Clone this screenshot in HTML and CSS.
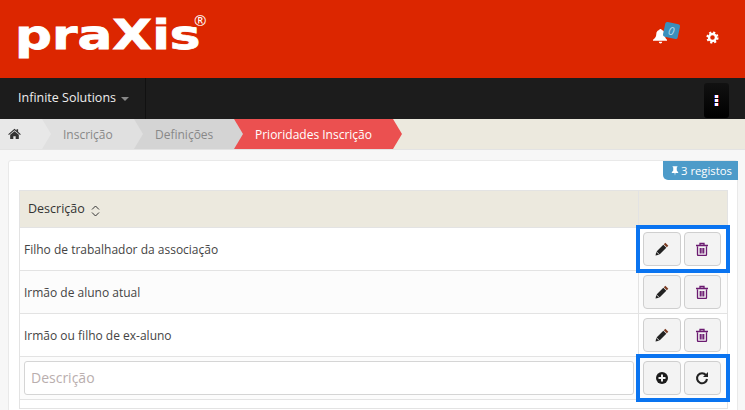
FILE: index.html
```html
<!DOCTYPE html>
<html lang="en">
<head>
    <meta charset="UTF-8">
    <title>Prioridades Inscrição</title>
    <link rel="stylesheet" href="styles.css">
</head>
<body>
    <header class="top-header">
        <div class="logo"><span class="logo-word">praXis</span><span class="logo-reg">®</span></div>
        <div class="header-icons">
            <div class="bell-wrap">
                <svg class="bell" viewBox="0 0 16 16"><path d="M8.500 1c.8 0 1.200.5 1.200 1.100 2 .5 3 2 3 4 0 3 .8 4.600 2.300 5.600v1.100H1v-1.100C2.700 10.700 4.300 9.100 4.300 6.100c0-2 1-3.500 3-4C7.300 1.500 7.700 1 8.500 1zM6.800 13.800h3.400a1.700 1.700 0 0 1-3.400 0z" fill="#fff"/></svg>
                <span class="bell-badge">0</span>
            </div>
            <svg class="cog" viewBox="0 0 16 16"><circle cx="8" cy="8" r="4.300" fill="none" stroke="#fff" stroke-width="3"/><circle cx="8" cy="8" r="6.300" fill="none" stroke="#fff" stroke-width="2.400" stroke-dasharray="2.600 2.350"/></svg>
        </div>
    </header>

    <nav class="navbar">
        <div class="nav-brand">Infinite Solutions <span class="caret"></span></div>
        <div class="nav-toggle"><span></span><span></span><span></span></div>
    </nav>

    <div class="breadcrumb">
        <a class="crumb crumb-home">
            <svg class="home-icon" viewBox="0 0 16 14"><path d="M8 .8l2.600 2.300V1.500h2v3.400L16 8l-.9 1L8 2.800.9 9 0 8zM2.500 8.700L8 4l5.500 4.700V14H9.500v-3.500h-3V14h-4z" fill="#333"/></svg>
        </a>
        <a class="crumb crumb-one">Inscrição</a>
        <a class="crumb crumb-two">Definições</a>
        <a class="crumb crumb-active">Prioridades Inscrição</a>
    </div>

    <main class="content">
        <section class="panel">
            <div class="panel-top">
                <span class="records">
                    <svg class="pin" viewBox="0 0 10 12"><path d="M2 0h6v1l-.8.500v4L9 7.500V8.500H5.600L5 12l-.6-3.500H1V7.500l1.800-2v-4L2 1z" fill="#fff"/></svg>3 registos
                </span>
            </div>
            <table class="grid">
                <thead>
                    <tr>
                        <th>Descrição
                            <svg class="sort" viewBox="0 0 9 12"><path d="M1 4.500L4.500 1 8 4.500M1 7.500L4.500 11 8 7.500" fill="none" stroke="#333" stroke-width="1"/></svg>
                        </th>
                        <th class="col-actions"></th>
                    </tr>
                </thead>
                <tbody>
                    <tr>
                        <td>Filho de trabalhador da associação</td>
                        <td class="col-actions">
                            <div class="actions marked">
                                <button class="btn"><svg class="icon"><use href="#i-pencil"/></svg></button>
                                <button class="btn"><svg class="icon"><use href="#i-trash"/></svg></button>
                            </div>
                        </td>
                    </tr>
                    <tr class="odd">
                        <td>Irmão de aluno atual</td>
                        <td class="col-actions">
                            <div class="actions">
                                <button class="btn"><svg class="icon"><use href="#i-pencil"/></svg></button>
                                <button class="btn"><svg class="icon"><use href="#i-trash"/></svg></button>
                            </div>
                        </td>
                    </tr>
                    <tr>
                        <td>Irmão ou filho de ex-aluno</td>
                        <td class="col-actions">
                            <div class="actions">
                                <button class="btn"><svg class="icon"><use href="#i-pencil"/></svg></button>
                                <button class="btn"><svg class="icon"><use href="#i-trash"/></svg></button>
                            </div>
                        </td>
                    </tr>
                    <tr class="odd">
                        <td class="input-cell"><input class="field" type="text" placeholder="Descrição"></td>
                        <td class="col-actions">
                            <div class="actions marked">
                                <button class="btn"><svg class="icon"><use href="#i-plus"/></svg></button>
                                <button class="btn"><svg class="icon"><use href="#i-redo"/></svg></button>
                            </div>
                        </td>
                    </tr>
                </tbody>
            </table>
            <div class="grid-foot"></div>
        </section>
    </main>

    <svg class="sprites">
        <symbol id="i-pencil" viewBox="0 0 14 14">
            <path d="M10.300 .8l3 3-1.500 1.500-3-3z" fill="#7a3a20"/>
            <path d="M8.300 2.800l3 3-6.700 6.700-3-3z" fill="#222"/>
            <path d="M1.300 10l2.800 2.800-3.600.8z" fill="#222"/>
        </symbol>
        <symbol id="i-trash" viewBox="0 0 14 14">
            <path d="M2.500 4.500v8c0 .6.400 1 1 1h7c.6 0 1-.4 1-1v-8M1 3.500h12M5 3.500V1.500h4v2M5.300 6v5.500M7 6v5.500M8.700 6v5.500" fill="none" stroke="#6b1a70" stroke-width="1.300"/>
        </symbol>
        <symbol id="i-plus" viewBox="0 0 14 14">
            <circle cx="7" cy="7" r="6" fill="#1c1c1c"/>
            <path d="M7 3.500v7M3.500 7h7" stroke="#f3f3f3" stroke-width="2"/>
        </symbol>
        <symbol id="i-redo" viewBox="0 0 14 14">
            <path d="M11 4.200A5 5 0 1 0 12 8" fill="none" stroke="#222" stroke-width="2.100"/>
            <path d="M13 1v5H8z" fill="#222"/>
        </symbol>
    </svg>
</body>
</html>
```

FILE: styles.css
```css
* {
    margin: 0;
    padding: 0;
    box-sizing: border-box;
}

body {
    font-family: 'Open Sans', 'Liberation Sans', sans-serif;
    background: #f7f7f7;
    color: #444;
    width: 745px;
    height: 410px;
    overflow: hidden;
}

/* header */
.top-header {
    height: 78px;
    background: #dc2600;
    display: flex;
    justify-content: space-between;
    align-items: center;
    padding: 0 26px 0 15px;
}

.logo {
    display: flex;
    align-items: flex-start;
    color: #fff;
    margin-top: -8px;
}

.logo-word {
    display: inline-block;
    font-family: 'DejaVu Sans', sans-serif;
    font-weight: 700;
    font-size: 41px;
    line-height: 44px;
    width: 149px;
    -webkit-text-stroke: 0.8px #fff;
    transform: scaleX(1.26);
    transform-origin: left center;
}

.logo-reg {
    font-size: 15px;
    line-height: 15px;
    margin-left: 30px;
    margin-top: 0;
}

.header-icons {
    display: flex;
    align-items: center;
    gap: 38px;
}

.bell-wrap {
    position: relative;
    width: 16px;
    height: 16px;
    margin-top: -7px;
}

.bell {
    width: 16px;
    height: 16px;
    display: block;
}

.bell-badge {
    position: absolute;
    top: -5px;
    left: 12px;
    width: 15px;
    height: 15px;
    background: #3a8fbc;
    color: #b8dcee;
    font-size: 11px;
    font-style: italic;
    line-height: 15px;
    text-align: center;
    border-radius: 2px;
    transform: rotate(12deg);
}

.cog {
    width: 13px;
    height: 13px;
    margin-top: -4px;
}

/* navbar */
.navbar {
    height: 41px;
    background: #1c1c1c;
    display: flex;
    justify-content: space-between;
    padding: 0 16px 0 18px;
    color: #eee;
}

.nav-brand {
    width: 128px;
    border-right: 1px solid #111;
    font-size: 12.500px;
    line-height: 39px;
}

.caret {
    display: inline-block;
    border: 4px solid transparent;
    border-top-color: #888;
    border-bottom: 0;
    margin-left: 2px;
    vertical-align: middle;
}

.nav-toggle {
    width: 25px;
    height: 35px;
    margin-top: 5px;
    background: linear-gradient(#111, #000);
    border-radius: 3px;
    display: flex;
    flex-direction: column;
    justify-content: center;
    align-items: center;
    gap: 1px;
}

.nav-toggle span {
    width: 5px;
    height: 3px;
    background: linear-gradient(90deg, #2a3fd8 20%, #fff 20%, #fff 80%, #c02020 80%);
}

/* breadcrumb */
.breadcrumb {
    height: 31px;
    background: #ece9de;
    border-bottom: 1px solid #e3e3e3;
    display: flex;
    font-size: 12px;
    line-height: 31px;
}

.crumb {
    position: relative;
    height: 30px;
    margin-right: -9px;
    clip-path: polygon(0 0, calc(100% - 9px) 0, 100% 50%, calc(100% - 9px) 100%, 0 100%);
}

.crumb-home {
    width: 51px;
    background: #e8e8e8;
    z-index: 4;
    padding: 9px 0 0 8px;
}

.home-icon {
    display: block;
    width: 13px;
    height: 11px;
}

.crumb-one {
    width: 101px;
    background: #e0e0e0;
    color: #888;
    z-index: 3;
    padding-left: 21px;
}

.crumb-two {
    width: 109px;
    background: #d4d4d4;
    color: #888;
    z-index: 2;
    padding-left: 21px;
}

.crumb-active {
    width: 168px;
    background: #eb5050;
    color: #fff;
    font-weight: 500;
    z-index: 1;
    padding-left: 21px;
}

/* content */
.content {
    padding: 10px 7px 0 8px;
}

.panel {
    background: #fff;
    border: 1px solid #e9e9e9;
    border-radius: 3px 3px 0 0;
    height: 260px;
    padding: 0 10px;
}

.panel-top {
    height: 29px;
    display: flex;
    justify-content: flex-end;
    margin-right: -11px;
}

.records {
    width: 75px;
    height: 19px;
    padding-left: 8px;
    background: #4d9bc9;
    color: #fff;
    font-size: 11.300px;
    line-height: 19px;
    border-radius: 0 0 0 5px;
    white-space: nowrap;
}

.pin {
    width: 8px;
    height: 10px;
    margin-right: 2px;
    vertical-align: -1px;
}

.grid {
    width: 709px;
    border-collapse: collapse;
    table-layout: fixed;
    font-size: 12px;
}

.grid th,
.grid td {
    border: 1px solid #e3e3e3;
    text-align: left;
    font-weight: 400;
}

.grid th {
    height: 37px;
    background: #ece9de;
    color: #333;
    font-size: 12.500px;
    padding: 0 0 2px 8px;
}

.sort {
    width: 9px;
    height: 12px;
    margin-left: 3px;
    vertical-align: -4px;
}

.grid td {
    height: 43px;
    padding-left: 4px;
    color: #444;
}

.grid tr.odd td {
    background: #fcfcfc;
}

.grid .col-actions {
    width: 89px;
    padding: 0 0 0 1px;
}

.actions {
    display: flex;
    gap: 3px;
    width: 86px;
    padding: 3px 5px 3px 3px;
    height: 40px;
}

.actions.marked {
    outline: 4px solid #0a74f0;
}

.btn {
    flex: 1;
    height: 34px;
    background: #f3f3f3;
    border: 1px solid #cfcfcf;
    border-radius: 4px;
    display: flex;
    align-items: center;
    justify-content: center;
}

.icon {
    width: 14px;
    height: 14px;
}

.input-cell {
    padding-right: 4px;
}

.field {
    display: block;
    width: 100%;
    height: 34px;
    border: 1px solid #d5d5d5;
    border-radius: 3px;
    padding: 0 6px 2px;
    font-family: inherit;
    font-size: 14px;
    color: #444;
}

.field::placeholder {
    color: #b9aeae;
}

.grid-foot {
    width: 709px;
    height: 9px;
    border: 1px solid #e3e3e3;
    border-top: 0;
}

.sprites {
    display: none;
}
```
